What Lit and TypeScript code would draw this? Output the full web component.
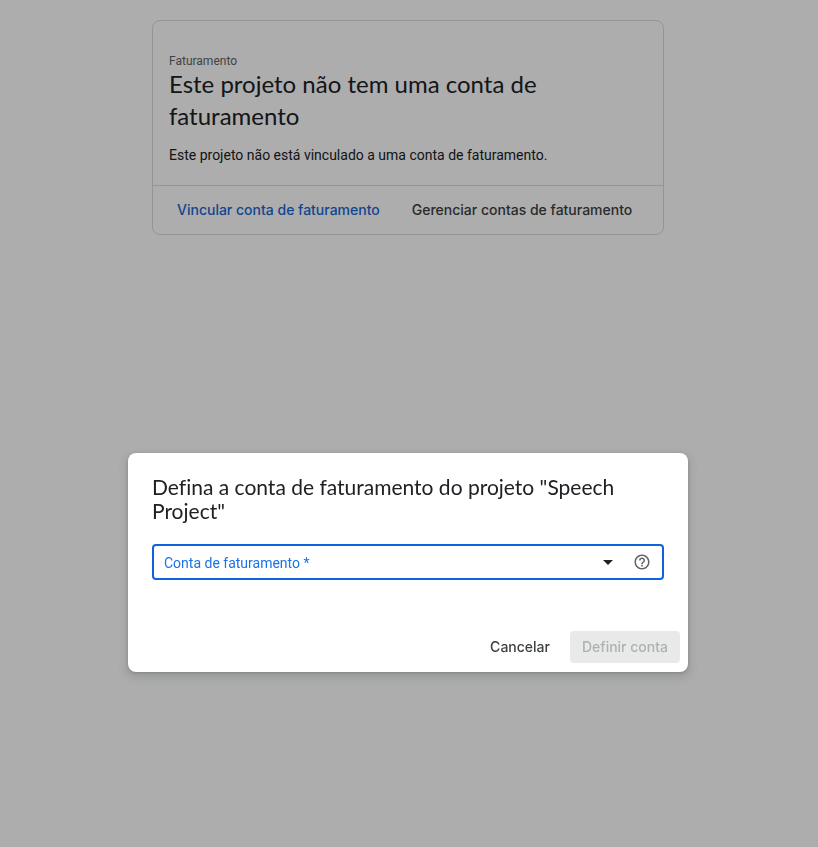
import { LitElement, html, css } from "lit";
import { customElement } from "lit/decorators.js";

@customElement("billing-card")
class BillingCard extends LitElement {
  static styles = css`
    :host {
      display: block;
      width: 100%;
      max-width: 512px;
      box-sizing: border-box;
      border: 1px solid #dadce0;
      border-radius: 8px;
      color: #202124;
    }
    .body {
      padding: 33px 16px 20px;
    }
    .eyebrow {
      margin: 0;
      font-size: 12px;
      line-height: 14px;
      color: #5f6368;
    }
    .title {
      margin: 0 0 13px;
      font: 400 24px/32px "Google Sans", Lato, sans-serif;
    }
    .text {
      margin: 0;
      font-size: 14px;
      line-height: 20px;
    }
    .actions {
      display: flex;
      flex-wrap: wrap;
      gap: 8px;
      padding: 8px 12px;
      border-top: 1px solid #dadce0;
    }
    .action {
      padding: 0 12px;
      border: 0;
      background: none;
      color: #3c4043;
      font: 500 14px/32px "Google Sans", Inter, sans-serif;
    }
    .primary {
      color: #1967d2;
    }
  `;

  render() {
    return html`
      <div class="body">
        <p class="eyebrow">Faturamento</p>
        <h1 class="title">Este projeto não tem uma conta de faturamento</h1>
        <p class="text">Este projeto não está vinculado a uma conta de faturamento.</p>
      </div>
      <div class="actions">
        <button class="action primary">Vincular conta de faturamento</button>
        <button class="action">Gerenciar contas de faturamento</button>
      </div>
    `;
  }
}

@customElement("account-dialog")
class AccountDialog extends LitElement {
  static styles = css`
    :host {
      display: block;
      width: 100%;
      max-width: 560px;
      box-sizing: border-box;
      padding: 22px 8px 9px;
      border-radius: 8px;
      background: #fff;
      box-shadow: 0 1px 3px rgba(60, 64, 67, 0.3), 0 4px 8px 3px rgba(60, 64, 67, 0.15);
      color: #202124;
    }
    .title {
      margin: 0 16px 21px;
      font: 400 21px/24px "Google Sans", Lato, sans-serif;
      font-variant-ligatures: none;
    }
    .field {
      display: flex;
      align-items: center;
      height: 32px;
      margin: 0 16px;
      border: 2px solid #1062dc;
      border-radius: 4px;
    }
    .picker {
      flex: 1;
      display: grid;
      grid-template-columns: 1fr 24px;
      align-items: center;
      height: 100%;
    }
    .label {
      grid-area: 1 / 1;
      padding: 2px 0 0 10px;
      font-size: 14px;
      line-height: 20px;
      color: #1a73e8;
      pointer-events: none;
      z-index: 1;
    }
    .select {
      grid-area: 1 / 1 / 2 / 3;
      width: 100%;
      height: 100%;
      padding: 0 10px;
      border: 0;
      outline: 0;
      appearance: none;
      background: none;
      font: inherit;
    }
    .arrow {
      grid-area: 1 / 2;
      width: 24px;
      height: 24px;
      pointer-events: none;
    }
    .help {
      display: flex;
      margin: 0 11px 0 13px;
      padding: 0;
      border: 0;
      background: none;
    }
    .buttons {
      display: flex;
      justify-content: flex-end;
      gap: 8px;
      margin-top: 51px;
    }
    .button {
      padding: 0 12px;
      border: 0;
      border-radius: 4px;
      background: none;
      color: #3c4043;
      font: 500 14px/32px "Google Sans", Inter, sans-serif;
    }
    .button:disabled {
      background: #e8eaea;
      color: #afb1b1;
    }
  `;

  render() {
    return html`
      <h2 class="title">Defina a conta de faturamento do projeto "Speech Project"</h2>
      <div class="field">
        <div class="picker">
          <label class="label" for="account">Conta de faturamento *</label>
          <select class="select" id="account" required>
            <option value=""></option>
          </select>
          <svg class="arrow" viewBox="0 0 24 24" aria-hidden="true">
            <path d="M7 10h10l-5 5z" fill="#202124" />
          </svg>
        </div>
        <button class="help" aria-label="Ajuda">
          <svg width="18" height="18" viewBox="0 0 24 24" aria-hidden="true">
            <path
              fill="#5f6368"
              d="M11 18h2v-2h-2v2zm1-16C6.48 2 2 6.48 2 12s4.480 10 10 10 10-4.480 10-10S17.520 2 12 2zm0 18c-4.410 0-8-3.590-8-8s3.590-8 8-8 8 3.590 8 8-3.590 8-8 8zm0-14c-2.210 0-4 1.790-4 4h2c0-1.100.9-2 2-2s2 .9 2 2c0 2-3 1.750-3 5h2c0-2.250 3-2.500 3-5 0-2.210-1.790-4-4-4z"
            />
          </svg>
        </button>
      </div>
      <div class="buttons">
        <button class="button">Cancelar</button>
        <button class="button" disabled>Definir conta</button>
      </div>
    `;
  }
}

@customElement("app-root")
class AppRoot extends LitElement {
  static styles = css`
    :host {
      display: block;
      min-height: 100vh;
      background: #fff;
      font-family: Roboto, sans-serif;
    }
    .page {
      display: flex;
      justify-content: center;
      padding: 20px 2px 20px 0;
    }
    .overlay {
      position: fixed;
      inset: 0;
      display: flex;
      justify-content: center;
      align-items: flex-start;
      padding: 453px 2px 0 0;
      background: rgba(0, 0, 0, 0.32);
    }
  `;

  render() {
    return html`
      <main class="page"><billing-card></billing-card></main>
      <div class="overlay">
        <account-dialog role="dialog" aria-modal="true" aria-label="Definir conta de faturamento"></account-dialog>
      </div>
    `;
  }
}
